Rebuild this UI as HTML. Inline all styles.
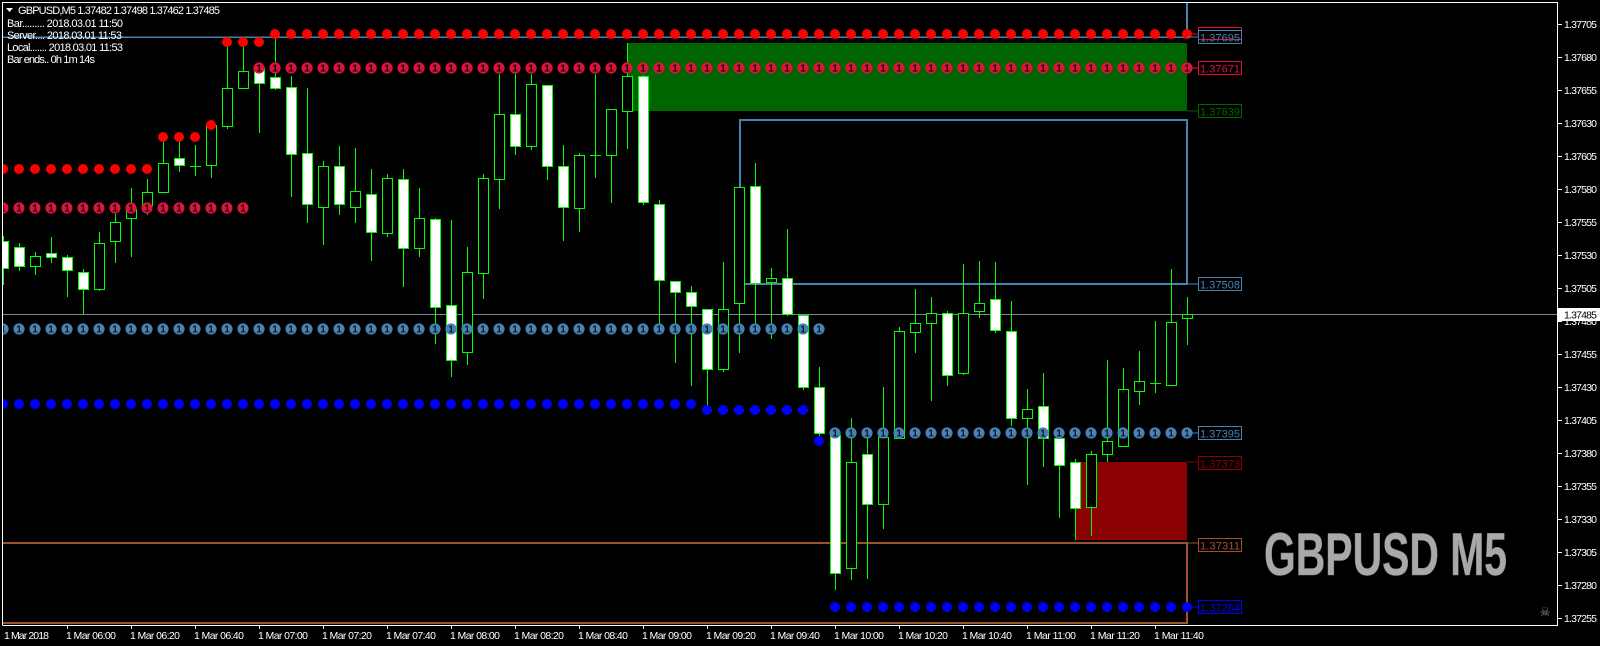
<!DOCTYPE html>
<html><head><meta charset="utf-8"><style>
html,body{margin:0;padding:0;background:#000;width:1600px;height:646px;overflow:hidden}
svg{display:block}
text{font-family:"Liberation Sans",sans-serif}
</style></head><body>
<svg width="1600" height="646" viewBox="0 0 1600 646" xmlns="http://www.w3.org/2000/svg">
<defs>
<pattern id="pr" patternUnits="userSpaceOnUse" width="16" height="16"><circle cx="8" cy="8" r="5" fill="#ff0000"/></pattern>
<pattern id="pb" patternUnits="userSpaceOnUse" width="16" height="16"><circle cx="8" cy="8" r="5" fill="#0000ff"/></pattern>
<pattern id="pc" patternUnits="userSpaceOnUse" width="16" height="16"><circle cx="8" cy="8" r="5.6" fill="#dc143c"/><text x="8" y="11.5" font-size="10" font-weight="bold" text-anchor="middle" fill="#1a0000">1</text></pattern>
<pattern id="ps" patternUnits="userSpaceOnUse" width="16" height="16"><circle cx="8" cy="8" r="5.6" fill="#4682b4"/><text x="8" y="11.5" font-size="10" font-weight="bold" text-anchor="middle" fill="#0a1a2a">1</text></pattern>
<clipPath id="cl"><rect x="3" y="3" width="1554" height="621"/></clipPath>
</defs>
<rect width="1600" height="646" fill="#000"/>
<g clip-path="url(#cl)" shape-rendering="crispEdges">
<!-- zones -->
<rect x="627" y="43" width="560" height="68" fill="#006400"/>
<rect x="1075" y="462" width="112" height="78" fill="#8b0000"/>
<rect x="740" y="120" width="447" height="164" fill="none" stroke="#4682b4" stroke-width="2"/>
<line x1="0" y1="37" x2="1187" y2="37" stroke="#4682b4" stroke-width="1.5"/>
<line x1="1187" y1="0" x2="1187" y2="37" stroke="#4682b4" stroke-width="2"/>
<path d="M0 543H1187V623H0" fill="none" stroke="#a0522d" stroke-width="2"/>
<line x1="0" y1="314.5" x2="1558" y2="314.5" stroke="#778899" stroke-width="1"/>
<!-- candles -->
<g stroke="#00ff00" stroke-width="1" id="candles"></g>
</g>
<g clip-path="url(#cl)" shape-rendering="crispEdges" stroke="#00ff00" stroke-width="1">
<path fill="none" d="
M3.5 236V285M19.5 243V271M35.5 252V275M51.5 237V263M67.5 255V297M83.5 269V314M99.5 232V291M115.5 214V263M131.5 188V257M147.5 179V215M163.5 137V192M179.5 141V172M195.5 145V176M211.5 122V178M227.5 42V129M243.5 42V88M259.5 64V133M275.5 35V90M291.5 76V197M307.5 88V223M323.5 161V245M339.5 146V215M355.5 148V223M371.5 169V261M387.5 174V237M403.5 169V287M419.5 188V257M435.5 218V344M451.5 220V377M467.5 247V365M483.5 174V299M499.5 74V209M515.5 68V155M531.5 74V150M547.5 85V180M563.5 145V241M579.5 153V232M595.5 74V178M611.5 109V203M627.5 43V149M643.5 75V205M659.5 200V327M675.5 281V363M691.5 286V386M707.5 309V406M723.5 262V372M739.5 187V353M755.5 163V330M771.5 268V339M787.5 229V316M803.5 315V390M819.5 367V440M835.5 435V590M851.5 418V580M867.5 430V579M883.5 387V529M899.5 327V438M915.5 289V353M931.5 297V401M947.5 311V386M963.5 264V375M979.5 261V318M995.5 262V333M1011.5 301V426M1027.5 389V485M1043.5 373V467M1059.5 430V518M1075.5 459V540M1091.5 451V536M1107.5 360V462M1123.5 368V446M1139.5 351V405M1155.5 321V393M1171.5 269V386M1187.5 297V345
M190 166.5H201M590 155.5H601M1150 383.5H1161"/>
<g fill="#fff">
<rect x="-2.5" y="241.5" width="11" height="27"/>
<rect x="14.5" y="247.5" width="10" height="19"/>
<rect x="46.5" y="253.5" width="10" height="4"/>
<rect x="62.5" y="257.5" width="10" height="13"/>
<rect x="78.5" y="272.5" width="10" height="17"/>
<rect x="174.5" y="158.5" width="10" height="7"/>
<rect x="254.5" y="68.5" width="10" height="15"/>
<rect x="270.5" y="77.5" width="10" height="11"/>
<rect x="286.5" y="87.5" width="10" height="67"/>
<rect x="302.5" y="153.5" width="10" height="51"/>
<rect x="334.5" y="166.5" width="10" height="38"/>
<rect x="366.5" y="194.5" width="10" height="38"/>
<rect x="398.5" y="179.5" width="10" height="69"/>
<rect x="430.5" y="219.5" width="10" height="88"/>
<rect x="446.5" y="305.5" width="10" height="55"/>
<rect x="510.5" y="114.5" width="10" height="32"/>
<rect x="542.5" y="85.5" width="10" height="81"/>
<rect x="558.5" y="166.5" width="10" height="41"/>
<rect x="638.5" y="76.5" width="10" height="126"/>
<rect x="654.5" y="204.5" width="10" height="76"/>
<rect x="670.5" y="281.5" width="10" height="11"/>
<rect x="686.5" y="292.5" width="10" height="14"/>
<rect x="702.5" y="309.5" width="10" height="60"/>
<rect x="750.5" y="186.5" width="10" height="97"/>
<rect x="782.5" y="278.5" width="10" height="36"/>
<rect x="798.5" y="315.5" width="10" height="72"/>
<rect x="814.5" y="387.5" width="10" height="46"/>
<rect x="830.5" y="435.5" width="10" height="138"/>
<rect x="862.5" y="454.5" width="10" height="50"/>
<rect x="942.5" y="313.5" width="10" height="62"/>
<rect x="990.5" y="299.5" width="10" height="31"/>
<rect x="1006.5" y="331.5" width="10" height="87"/>
<rect x="1038.5" y="406.5" width="10" height="32"/>
<rect x="1054.5" y="438.5" width="10" height="27"/>
<rect x="1070.5" y="462.5" width="10" height="46"/>
</g>
<g fill="#000">
<rect x="30.5" y="256.5" width="10" height="10"/>
<rect x="94.5" y="243.5" width="10" height="46"/>
<rect x="110.5" y="222.5" width="10" height="19"/>
<rect x="126.5" y="209.5" width="10" height="9"/>
<rect x="142.5" y="192.5" width="10" height="13"/>
<rect x="158.5" y="163.5" width="10" height="29"/>
<rect x="206.5" y="125.5" width="10" height="40"/>
<rect x="222.5" y="88.5" width="10" height="38"/>
<rect x="238.5" y="71.5" width="10" height="17"/>
<rect x="318.5" y="166.5" width="10" height="41"/>
<rect x="350.5" y="191.5" width="10" height="16"/>
<rect x="382.5" y="178.5" width="10" height="55"/>
<rect x="414.5" y="218.5" width="10" height="30"/>
<rect x="462.5" y="272.5" width="10" height="80"/>
<rect x="478.5" y="178.5" width="10" height="95"/>
<rect x="494.5" y="114.5" width="10" height="65"/>
<rect x="526.5" y="84.5" width="10" height="62"/>
<rect x="574.5" y="155.5" width="10" height="53"/>
<rect x="606.5" y="109.5" width="10" height="46"/>
<rect x="622.5" y="76.5" width="10" height="35"/>
<rect x="718.5" y="309.5" width="10" height="60"/>
<rect x="734.5" y="187.5" width="10" height="116"/>
<rect x="766.5" y="278.5" width="10" height="4"/>
<rect x="846.5" y="462.5" width="10" height="106"/>
<rect x="878.5" y="437.5" width="10" height="67"/>
<rect x="894.5" y="331.5" width="10" height="107"/>
<rect x="910.5" y="323.5" width="10" height="9"/>
<rect x="926.5" y="313.5" width="10" height="10"/>
<rect x="958.5" y="313.5" width="10" height="60"/>
<rect x="974.5" y="303.5" width="10" height="8"/>
<rect x="1022.5" y="409.5" width="10" height="9"/>
<rect x="1086.5" y="454.5" width="10" height="53"/>
<rect x="1102.5" y="441.5" width="10" height="13"/>
<rect x="1118.5" y="389.5" width="10" height="57"/>
<rect x="1134.5" y="381.5" width="10" height="10"/>
<rect x="1166.5" y="322.5" width="10" height="63"/>
<rect x="1182.5" y="314.5" width="10" height="4"/>
</g>
</g>
<!-- dot rows -->
<g clip-path="url(#cl)">
<g transform="translate(-5,161)"><rect x="0" width="160" height="16" fill="url(#pr)"/></g>
<g transform="translate(-5,129)"><rect x="160" width="48" height="16" fill="url(#pr)"/></g>
<g transform="translate(-5,117)"><rect x="208" width="16" height="16" fill="url(#pr)"/></g>
<g transform="translate(-5,34)"><rect x="224" width="48" height="16" fill="url(#pr)"/></g>
<g transform="translate(-5,26)"><rect x="272" width="928" height="16" fill="url(#pr)"/></g>
<g transform="translate(-5,200)"><rect x="0" width="256" height="16" fill="url(#pc)"/></g>
<g transform="translate(-5,60)"><rect x="256" width="944" height="16" fill="url(#pc)"/></g>
<g transform="translate(-5,321)"><rect x="0" width="832" height="16" fill="url(#ps)"/></g>
<g transform="translate(-5,425)"><rect x="832" width="368" height="16" fill="url(#ps)"/></g>
<g transform="translate(-5,396)"><rect x="0" width="704" height="16" fill="url(#pb)"/></g>
<g transform="translate(-5,402)"><rect x="704" width="112" height="16" fill="url(#pb)"/></g>
<g transform="translate(-5,433)"><rect x="816" width="16" height="16" fill="url(#pb)"/></g>
<g transform="translate(-5,599)"><rect x="832" width="368" height="16" fill="url(#pb)"/></g>
</g>
<!-- right labels -->
<g font-size="11" shape-rendering="crispEdges">
<line x1="1187" y1="34" x2="1198" y2="34" stroke="#ff0000"/><rect x="1198.5" y="27.5" width="43" height="12" fill="#000" stroke="#dc143c"/>
<line x1="1187" y1="37" x2="1198" y2="37" stroke="#4682b4"/><rect x="1198.5" y="30.5" width="43" height="13" fill="none" stroke="#4682b4"/><text x="1200" y="41.5" fill="#4682b4" textLength="40">1.37695</text>
<line x1="1187" y1="68" x2="1198" y2="68" stroke="#dc143c"/><rect x="1198.5" y="61.5" width="43" height="13" fill="#000" stroke="#dc143c"/><text x="1200" y="72.5" fill="#dc143c" textLength="40">1.37671</text>
<line x1="1187" y1="111" x2="1198" y2="111" stroke="#006400"/><rect x="1198.5" y="104.5" width="43" height="13" fill="#000" stroke="#006400"/><text x="1200" y="115.5" fill="#006400" textLength="40">1.37639</text>
<line x1="1187" y1="284" x2="1198" y2="284" stroke="#4682b4"/><rect x="1198.5" y="277.5" width="43" height="13" fill="#000" stroke="#4682b4"/><text x="1200" y="288.5" fill="#4682b4" textLength="40">1.37508</text>
<line x1="1187" y1="433" x2="1198" y2="433" stroke="#4682b4"/><rect x="1198.5" y="426.5" width="43" height="13" fill="#000" stroke="#4682b4"/><text x="1200" y="437.5" fill="#4682b4" textLength="40">1.37395</text>
<line x1="1187" y1="462" x2="1198" y2="462" stroke="#8b0000"/><rect x="1198.5" y="456.5" width="43" height="13" fill="#000" stroke="#8b0000"/><text x="1200" y="467.5" fill="#8b0000" textLength="40">1.37373</text>
<line x1="1187" y1="543" x2="1198" y2="543" stroke="#a0522d"/><rect x="1198.5" y="538.5" width="43" height="13" fill="#000" stroke="#a0522d"/><text x="1200" y="549.5" fill="#a0522d" textLength="40">1.37311</text>
<line x1="1187" y1="607" x2="1198" y2="607" stroke="#0000ff"/><rect x="1198.5" y="600.5" width="43" height="13" fill="#000" stroke="#0000ff"/><text x="1200" y="611.5" fill="#0000ff" textLength="40">1.37264</text>
</g>
<!-- watermark -->
<text x="1264" y="575" font-family="'Liberation Sans Narrow','Liberation Sans',sans-serif" font-weight="bold" font-size="60" fill="#a9a9a9" stroke="#7a8a9a" stroke-width="0.6" textLength="243" lengthAdjust="spacingAndGlyphs">GBPUSD M5</text>
<text x="1545" y="616" font-size="12" fill="#888" text-anchor="middle">☠</text>
<!-- frame -->
<g shape-rendering="crispEdges" stroke="#fff" fill="none">
<path d="M2.5 625V2.5H1557.5V625.5H2.5"/>
</g>
<!-- top-left info -->
<g fill="#fff" font-size="11">
<path d="M6 8H13L9.5 12Z" fill="#fff"/>
<text x="18" y="14" textLength="202">GBPUSD,M5  1.37482 1.37498 1.37462 1.37485</text>
<text x="7" y="27" textLength="116">Bar......... 2018.03.01 11:50</text>
<text x="7" y="39" textLength="115">Server.... 2018.03.01 11:53</text>
<text x="7" y="51" textLength="116">Local....... 2018.03.01 11:53</text>
<text x="7" y="63" textLength="88">Bar ends.. 0h 1m 14s</text>
</g>
<!-- price axis -->
<g fill="#fff" font-size="10.5" shape-rendering="crispEdges">
<path stroke="#fff" d="M1558 24.5h4M1558 57.5h4M1558 90.5h4M1558 123.5h4M1558 156.5h4M1558 189.5h4M1558 222.5h4M1558 255.5h4M1558 288.5h4M1558 321.5h4M1558 354.5h4M1558 387.5h4M1558 420.5h4M1558 453.5h4M1558 486.5h4M1558 519.5h4M1558 552.5h4M1558 585.5h4M1558 618.5h4"/>
<text x="1564" y="28" textLength="33">1.37705</text>
<text x="1564" y="61" textLength="33">1.37680</text>
<text x="1564" y="94" textLength="33">1.37655</text>
<text x="1564" y="127" textLength="33">1.37630</text>
<text x="1564" y="160" textLength="33">1.37605</text>
<text x="1564" y="193" textLength="33">1.37580</text>
<text x="1564" y="226" textLength="33">1.37555</text>
<text x="1564" y="259" textLength="33">1.37530</text>
<text x="1564" y="292" textLength="33">1.37505</text>
<text x="1564" y="325" textLength="33">1.37480</text>
<text x="1564" y="358" textLength="33">1.37455</text>
<text x="1564" y="391" textLength="33">1.37430</text>
<text x="1564" y="424" textLength="33">1.37405</text>
<text x="1564" y="457" textLength="33">1.37380</text>
<text x="1564" y="490" textLength="33">1.37355</text>
<text x="1564" y="523" textLength="33">1.37330</text>
<text x="1564" y="556" textLength="33">1.37305</text>
<text x="1564" y="589" textLength="33">1.37280</text>
<text x="1564" y="622" textLength="33">1.37255</text>
<rect x="1558" y="308" width="42" height="13" fill="#fff"/>
<text x="1564" y="318.5" fill="#000" textLength="33">1.37485</text>
</g>
<!-- time axis -->
<g fill="#fff" font-size="10.5" shape-rendering="crispEdges">
<path stroke="#fff" d="M67.5 625v4M131.5 625v4M195.5 625v4M259.5 625v4M323.5 625v4M387.5 625v4M451.5 625v4M515.5 625v4M579.5 625v4M643.5 625v4M707.5 625v4M771.5 625v4M835.5 625v4M899.5 625v4M963.5 625v4M1027.5 625v4M1091.5 625v4M1155.5 625v4"/>
<text x="4" y="639" textLength="45">1 Mar 2018</text>
<text x="66" y="639" textLength="50">1 Mar 06:00</text>
<text x="130" y="639" textLength="50">1 Mar 06:20</text>
<text x="194" y="639" textLength="50">1 Mar 06:40</text>
<text x="258" y="639" textLength="50">1 Mar 07:00</text>
<text x="322" y="639" textLength="50">1 Mar 07:20</text>
<text x="386" y="639" textLength="50">1 Mar 07:40</text>
<text x="450" y="639" textLength="50">1 Mar 08:00</text>
<text x="514" y="639" textLength="50">1 Mar 08:20</text>
<text x="578" y="639" textLength="50">1 Mar 08:40</text>
<text x="642" y="639" textLength="50">1 Mar 09:00</text>
<text x="706" y="639" textLength="50">1 Mar 09:20</text>
<text x="770" y="639" textLength="50">1 Mar 09:40</text>
<text x="834" y="639" textLength="50">1 Mar 10:00</text>
<text x="898" y="639" textLength="50">1 Mar 10:20</text>
<text x="962" y="639" textLength="50">1 Mar 10:40</text>
<text x="1026" y="639" textLength="50">1 Mar 11:00</text>
<text x="1090" y="639" textLength="50">1 Mar 11:20</text>
<text x="1154" y="639" textLength="50">1 Mar 11:40</text>
</g>
</svg>
</body></html>
